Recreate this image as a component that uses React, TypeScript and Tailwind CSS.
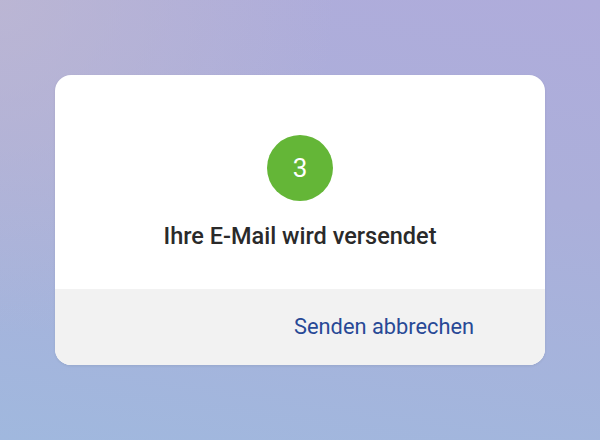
export default function App() {
  return (
    <main className="flex h-[440px] w-[600px] items-start justify-center bg-[radial-gradient(circle_at_0%_0%,rgba(190,184,210,0.8),transparent_45%),linear-gradient(188deg,#afacdb_0%,#abafda_40%,#a0b8de_100%)] pt-[75px] font-['Roboto',sans-serif]">
      <div className="flex w-[490px] flex-col overflow-hidden rounded-2xl bg-white shadow-[0_1px_3px_rgba(0,0,0,0.08)]">
        <div className="flex h-[214px] flex-col items-center pt-[60px]">
          <div className="flex h-[66px] w-[66px] items-center justify-center rounded-full bg-[#64b637] text-[26px] text-white">
            3
          </div>
          <h1 className="mt-[18px] text-[23.5px] font-medium leading-[34px] text-[#2a2a2a]">
            Ihre E-Mail wird versendet
          </h1>
        </div>
        <div className="flex h-[76px] items-center justify-end bg-[#f2f2f2] pr-[71px]">
          <button className="text-[21.8px] leading-none text-[#284996]">Senden abbrechen</button>
        </div>
      </div>
    </main>
  );
}
